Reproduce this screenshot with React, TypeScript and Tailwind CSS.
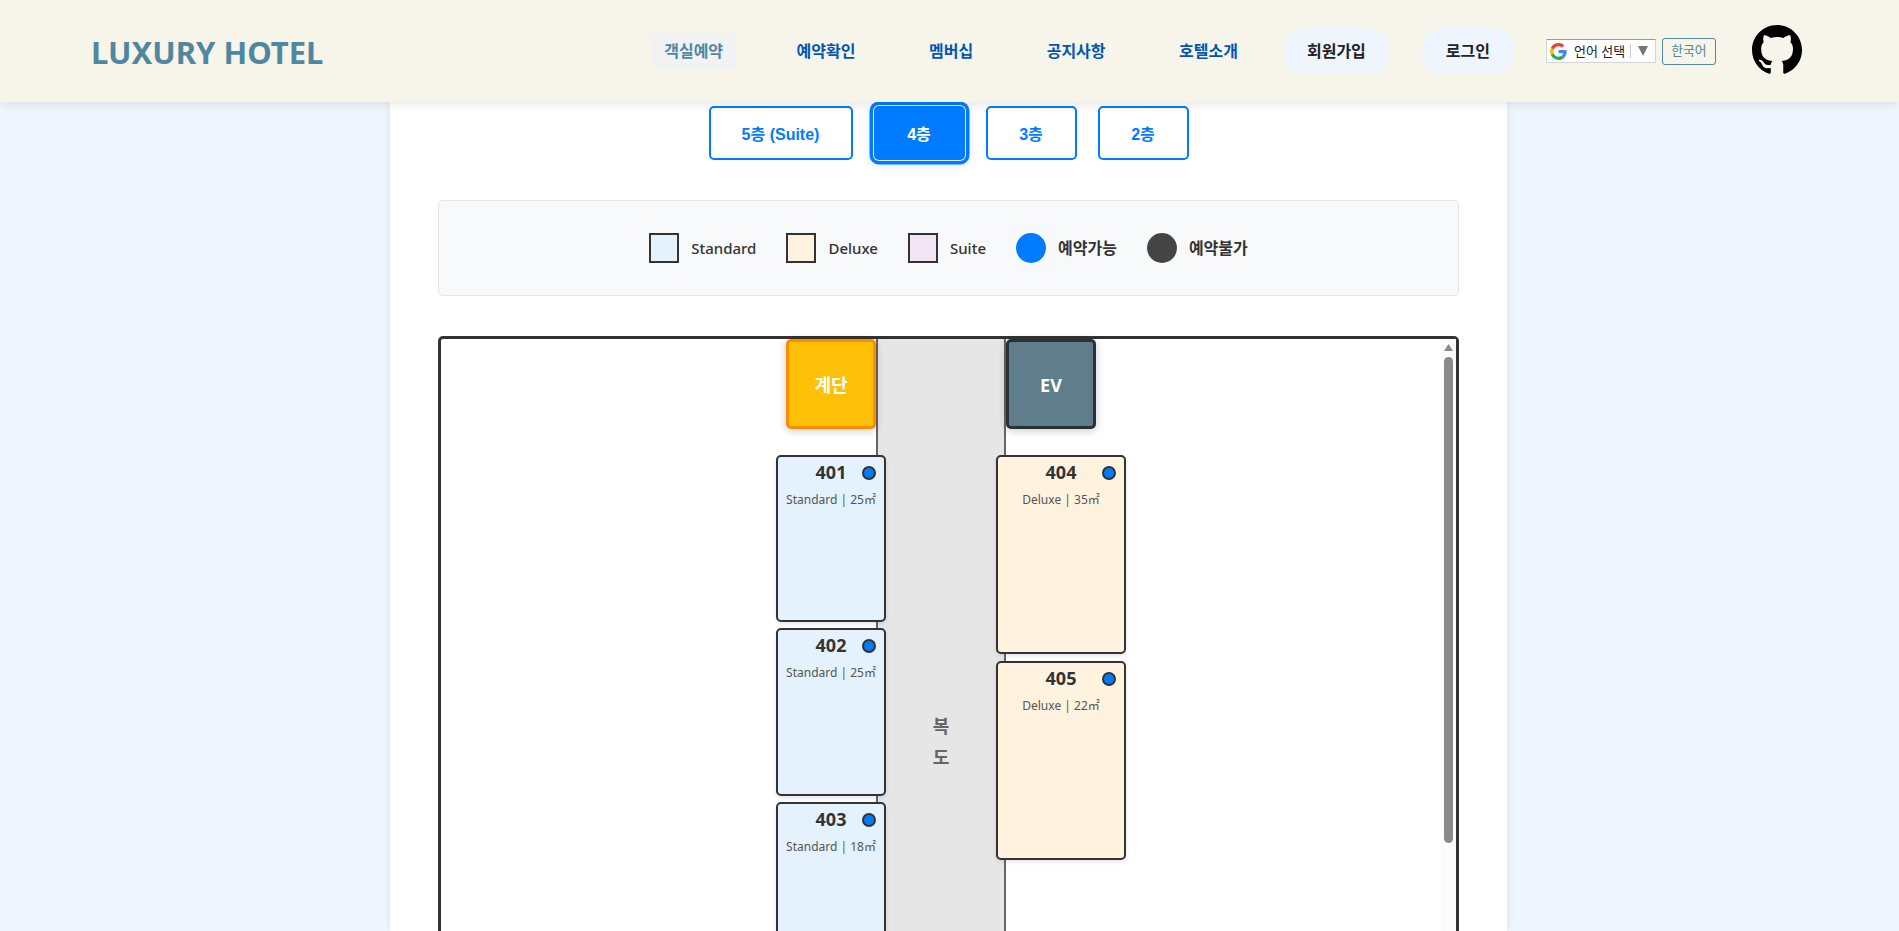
const rooms = [
  { id: '401', info: 'Standard | 25㎡', box: 'left-[335px] top-[116px] w-[110px] h-[167px] bg-[#e3f2fd]' },
  { id: '402', info: 'Standard | 25㎡', box: 'left-[335px] top-[289px] w-[110px] h-[168px] bg-[#e3f2fd]' },
  { id: '403', info: 'Standard | 18㎡', box: 'left-[335px] top-[463px] w-[110px] h-[168px] bg-[#e3f2fd]' },
  { id: '404', info: 'Deluxe | 35㎡', box: 'left-[555px] top-[116px] w-[130px] h-[199px] bg-[#fff3e0]' },
  { id: '405', info: 'Deluxe | 22㎡', box: 'left-[555px] top-[322px] w-[130px] h-[199px] bg-[#fff3e0]' },
];

const legend = [
  { label: 'Standard', swatch: 'bg-[#e3f2fd]' },
  { label: 'Deluxe', swatch: 'bg-[#fff3e0]' },
  { label: 'Suite', swatch: 'bg-[#f3e5f5]' },
];

const navLinks = ['예약확인', '멤버십', '공지사항', '호텔소개'];

function GoogleG() {
  return (
    <svg viewBox="0 0 48 48" className="h-[17px] w-[17px] shrink-0">
      <path fill="#EA4335" d="M24 9.5c3.5 0 6.7 1.2 9.2 3.6l6.9-6.9C35.9 2.4 30.5 0 24 0 14.6 0 6.5 5.4 2.6 13.2l8 6.2C12.5 13.7 17.8 9.5 24 9.5z" />
      <path fill="#4285F4" d="M46.9 24.5c0-1.6-.1-3.1-.4-4.5H24v9h12.9c-.6 3-2.2 5.5-4.7 7.2l7.7 6c4.5-4.2 7-10.3 7-17.7z" />
      <path fill="#FBBC05" d="M10.6 28.6c-.5-1.4-.8-3-.8-4.6s.3-3.2.8-4.6l-8-6.2C.9 16.5 0 20.1 0 24s.9 7.5 2.6 10.8l8-6.2z" />
      <path fill="#34A853" d="M24 48c6.5 0 11.9-2.1 15.9-5.8l-7.7-6c-2.2 1.4-4.9 2.3-8.2 2.3-6.2 0-11.5-4.2-13.4-9.9l-8 6.2C6.5 42.6 14.6 48 24 48z" />
    </svg>
  );
}

function GithubMark() {
  return (
    <svg viewBox="0 0 16 16" className="h-[50px] w-[50px]" fill="#000">
      <path d="M8 0C3.58 0 0 3.58 0 8c0 3.54 2.29 6.53 5.47 7.59.4.07.55-.17.55-.38 0-.19-.01-.82-.01-1.49-2.01.37-2.53-.49-2.69-.94-.09-.23-.48-.94-.82-1.13-.28-.15-.68-.52-.01-.53.63-.01 1.08.58 1.23.82.72 1.21 1.87.87 2.33.66.07-.52.28-.87.51-1.07-1.78-.2-3.64-.89-3.64-3.95 0-.87.31-1.59.82-2.15-.08-.2-.36-1.02.08-2.12 0 0 .67-.21 2.2.82.64-.18 1.32-.27 2-.27s1.36.09 2 .27c1.53-1.04 2.2-.82 2.2-.82.44 1.1.16 1.92.08 2.12.51.56.82 1.27.82 2.15 0 3.07-1.87 3.75-3.65 3.95.29.25.54.73.54 1.48 0 1.07-.01 1.93-.01 2.2 0 .21.15.46.55.38A8.01 8.01 0 0 0 16 8c0-4.42-3.58-8-8-8z" />
    </svg>
  );
}

function Header() {
  return (
    <header className="relative z-10 flex h-[102px] items-center bg-[#f7f4e9] pr-[97px] pl-[91px] shadow-[0_2px_10px_rgba(0,0,0,0.1)]">
      <span className="mt-[3px] text-[31px] font-bold text-[#4f87a0]">LUXURY HOTEL</span>
      <nav className="ml-auto flex items-center gap-[32px]">
        <div className="flex items-center gap-[47.5px] text-base font-semibold text-[#0056b3]">
          <a className="rounded-[5px] bg-[#f0f2f3] px-[13px] py-[5px] leading-[26px] text-[#4f87a0]">객실예약</a>
          {navLinks.map((link) => (
            <a key={link} className="px-[13px] py-[5px] leading-[26px]">
              {link}
            </a>
          ))}
        </div>
        <a className="flex h-[46px] items-center rounded-[20px] bg-[#eef5fd] px-[24px] text-base font-semibold text-[#222]">회원가입</a>
        <a className="flex h-[46px] items-center rounded-[20px] bg-[#eef5fd] px-[24px] text-base font-semibold text-[#222]">로그인</a>
        <div className="flex items-center gap-[6px]">
          <div className="flex h-[24px] w-[110px] items-center border border-[#d5d5d5] border-t-[#9a9a9a] bg-white pl-[3px] text-[13px] text-[#222]">
            <GoogleG />
            <span className="ml-[7px] leading-none">언어 선택</span>
            <span className="ml-[5px] h-[14px] w-px bg-[#ccc]" />
            <svg viewBox="0 0 10 10" className="ml-[7px] h-[10px] w-[10px]" fill="#767676">
              <path d="M0 0h10L5 10z" />
            </svg>
          </div>
          <button className="flex h-[27px] w-[54px] items-center justify-center rounded-[3px] border border-[#4f87a0] text-[12.8px] text-[#4f87a0]">한국어</button>
        </div>
        <div className="mb-[3px] ml-[4px] flex h-[50px] w-[50px]">
          <GithubMark />
        </div>
      </nav>
    </header>
  );
}

function FloorTabs() {
  const tabClass = "h-[54px] rounded-[5px] border-2 border-[#007bff] pt-[3px] font-['Liberation_Sans','Noto_Sans_CJK_KR',sans-serif] text-[16px] font-bold";
  return (
    <div className="flex justify-center gap-[21px] pt-[4px]">
      <button className={`${tabClass} w-[144px] bg-white text-[#007bff]`}>5층 (Suite)</button>
      <button className={`${tabClass} w-[91px] bg-[#007bff] text-white shadow-[0_0_0_1px_#dfeeff,0_0_0_4.5px_#007bff,0_2px_10px_4px_rgba(0,123,255,0.15)]`}>4층</button>
      <button className={`${tabClass} w-[91px] bg-white text-[#007bff]`}>3층</button>
      <button className={`${tabClass} w-[91px] bg-white text-[#007bff]`}>2층</button>
    </div>
  );
}

function Legend() {
  return (
    <div className="mt-[40px] ml-[48px] flex h-[96px] w-[1021px] items-center justify-center gap-[30px] rounded-[5px] border border-[#e3e5e8] bg-[#f8f9fa] text-[#333]">
      {legend.map((item) => (
        <div key={item.label} className="flex items-center gap-[12px]">
          <span className={`h-[30px] w-[30px] border-2 border-[#333] ${item.swatch}`} />
          <span className="text-[15px] font-medium">{item.label}</span>
        </div>
      ))}
      <div className="flex items-center gap-[12px]">
        <span className="h-[30px] w-[30px] rounded-full bg-[#007bff]" />
        <span className="text-[16px] font-semibold">예약가능</span>
      </div>
      <div className="flex items-center gap-[12px]">
        <span className="h-[30px] w-[30px] rounded-full bg-[#444]" />
        <span className="text-[16px] font-semibold">예약불가</span>
      </div>
    </div>
  );
}

function Room({ id, info, box }: { id: string; info: string; box: string }) {
  return (
    <div className={`absolute flex flex-col items-center rounded-[5px] border-2 border-[#333] pt-[3px] shadow-[0_2px_4px_rgba(0,0,0,0.1)] ${box}`}>
      <span className="text-[18px] leading-[24px] font-bold text-[#333]">{id}</span>
      <span className="mt-[7px] text-[12px] leading-[18px] text-[#555]">{info}</span>
      <span className="absolute top-[9px] right-[8px] h-[14px] w-[14px] rounded-full border-2 border-[#333] bg-[#007bff]" />
    </div>
  );
}

function FloorPlan() {
  return (
    <div className="mt-[40px] ml-[48px] flex h-[802px] w-[1021px] rounded-[5px] border-[3px] border-[#333]">
      <div className="relative flex-1">
        <div className="absolute top-0 bottom-0 left-[435px] flex w-[130px] flex-col items-center justify-center gap-[6px] border-x-2 border-[#666] bg-[#e6e6e6] pt-[10px] text-[18px] leading-[25px] font-semibold text-[#666]">
          <span>복</span>
          <span>도</span>
        </div>
        <div className="absolute top-0 left-[345px] flex h-[90px] w-[90px] items-center justify-center rounded-[5px] border-[3px] border-[#ff8c00] bg-[#ffc107] pt-[2px] text-[18px] font-bold text-white shadow-[0_2px_8px_rgba(0,0,0,0.2)]">
          계단
        </div>
        <div className="absolute top-0 left-[565px] flex h-[90px] w-[90px] items-center justify-center rounded-[5px] border-[3px] border-[#263238] bg-[#607d8b] pt-[2px] text-[18px] font-bold text-white shadow-[0_2px_8px_rgba(0,0,0,0.2)]">
          EV
        </div>
        {rooms.map((room) => (
          <Room key={room.id} {...room} />
        ))}
      </div>
      <div className="flex w-[15px] flex-col items-center bg-[#fbfbfb] pt-[5px]">
        <svg viewBox="0 0 9 7" className="h-[7px] w-[9px]" fill="#8a8a8a">
          <path d="M4.5 0 9 7H0z" />
        </svg>
        <div className="mt-[6px] h-[486px] w-[9px] rounded-full bg-[#8a8a8a]" />
      </div>
    </div>
  );
}

export default function App() {
  return (
    <div className="h-screen overflow-hidden bg-[#eff6fe] font-['Noto_Sans','Noto_Sans_CJK_KR',sans-serif]">
      <Header />
      <main className="ml-[390px] h-[829px] w-[1117px] bg-white shadow-[0_0_10px_rgba(0,0,0,0.08)]">
        <FloorTabs />
        <Legend />
        <FloorPlan />
      </main>
    </div>
  );
}
